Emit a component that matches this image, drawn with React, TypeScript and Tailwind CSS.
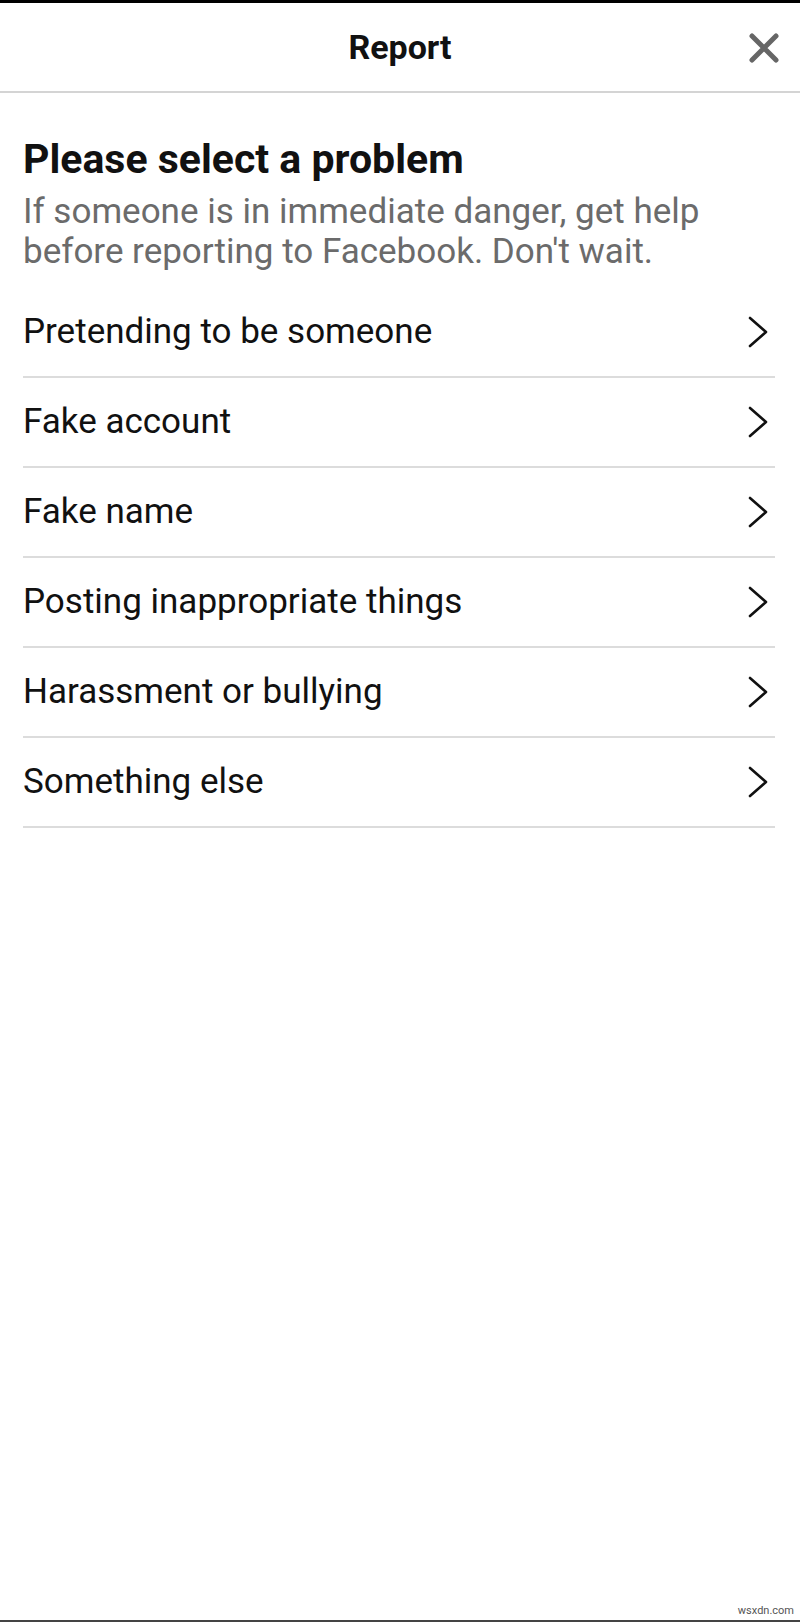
const problems = [
  "Pretending to be someone",
  "Fake account",
  "Fake name",
  "Posting inappropriate things",
  "Harassment or bullying",
  "Something else",
];

function CloseIcon() {
  return (
    <svg width="32" height="30" viewBox="0 0 32 30" fill="none">
      <path
        d="M4 3 L28 27 M28 3 L4 27"
        stroke="#666666"
        strokeWidth="5"
        strokeLinecap="round"
      />
    </svg>
  );
}

function Chevron() {
  return (
    <svg width="22" height="32" viewBox="0 0 22 32" fill="none">
      <path
        d="M3 2 L19 16 L3 30"
        stroke="#111111"
        strokeWidth="2.6"
        strokeLinecap="round"
        strokeLinejoin="round"
      />
    </svg>
  );
}

export default function App() {
  return (
    <div
      className="min-h-screen flex flex-col bg-white border-t-[3px] border-black"
      style={{ fontFamily: "Roboto, 'Noto Sans', sans-serif" }}
    >
      {/* top bar */}
      <div className="relative h-[90px] flex items-center justify-center border-b-2 border-[#d4d4d4]">
        <h1 className="text-[34px] font-bold text-[#111] leading-none">Report</h1>
        <button className="absolute right-[20px] top-[30px]">
          <CloseIcon />
        </button>
      </div>

      <div className="flex-1 pl-[23px] pr-[25px]">
        <h2 className="mt-[45px] text-[41px] leading-[42px] font-bold text-[#111]">
          Please select a problem
        </h2>
        <p className="mt-3 text-[35px] leading-[40px] text-[#6b6b6b]">
          If someone is in immediate danger, get help before reporting to Facebook. Don't wait.
        </p>

        <ul className="mt-4">
          {problems.map((p) => (
            <li
              key={p}
              className="h-[90px] flex items-center justify-between border-b-2 border-[#dcdcdc]"
            >
              <span className="text-[35px] text-[#111]">{p}</span>
              <span className="mr-[6px]">
                <Chevron />
              </span>
            </li>
          ))}
        </ul>
      </div>

      <div className="flex justify-end pr-[6px] pb-[4px] border-b-2 border-[#444]">
        <span className="text-[11px] leading-none text-[#555]">wsxdn.com</span>
      </div>
    </div>
  );
}
